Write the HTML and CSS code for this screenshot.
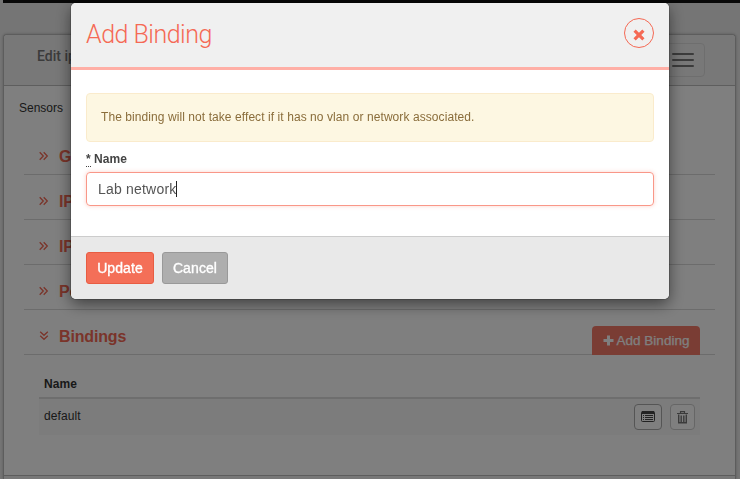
FILE: index.html
```html
<!DOCTYPE html>
<html lang="en">
<head>
<meta charset="utf-8">
<title>Add Binding</title>
<link rel="stylesheet" href="styles.css">
</head>
<body>
<svg class="defs" width="0" height="0">
  <symbol id="chevrons" viewBox="0 0 10 10"><path d="M.7 1.2 4.3 5 .7 8.8M4.7 1.2 8.3 5 4.7 8.8" fill="none" stroke="currentColor" stroke-width="1.3"/></symbol>
</svg>
<div class="page">
  <div class="topbar"></div>
  <main class="panel">
    <header class="panel-head">
      <h1>Edit ip</h1>
      <button class="menu" aria-label="Menu"><i></i><i></i><i></i></button>
    </header>
    <div class="panel-body">
      <nav class="crumb">Sensors</nav>
      <section class="row"><svg class="chev"><use href="#chevrons"/></svg><h2>G</h2></section>
      <section class="row"><svg class="chev"><use href="#chevrons"/></svg><h2>IP</h2></section>
      <section class="row"><svg class="chev"><use href="#chevrons"/></svg><h2>IP</h2></section>
      <section class="row"><svg class="chev"><use href="#chevrons"/></svg><h2>Po</h2></section>
      <section class="row"><svg class="chev open"><use href="#chevrons"/></svg><h2>Bindings</h2>
        <button class="add"><svg width="11" height="11" viewBox="0 0 11 11"><path d="M5.5 .5v10M.5 5.5h10" stroke="currentColor" stroke-width="3"/></svg><span>Add Binding</span></button>
      </section>
      <div class="table">
        <div class="th">Name</div>
        <div class="td"><span>default</span>
          <div class="actions">
            <button class="tool edit" aria-label="Edit"><svg width="14" height="12" viewBox="0 0 14 12"><rect x=".5" y=".5" width="13" height="10" rx="1" fill="none" stroke="currentColor"/><path d="M1 0h12v3H1z" fill="currentColor"/><path d="M2 4.5h1M4 4.5h8M2 6.5h1M4 6.5h8M2 8.5h1M4 8.5h8" stroke="currentColor"/></svg></button>
            <button class="tool trash" aria-label="Delete"><svg width="11" height="13" viewBox="0 0 11 13"><path d="M0 2.5h11M3.5 2V.7h4V2" fill="none" stroke="currentColor" stroke-width="1.2"/><path d="M1.7 3.5v8.2h7.6V3.5M4.2 4.5v6.5M6.8 4.5v6.5" fill="none" stroke="currentColor" stroke-width="1.4"/></svg></button>
          </div>
        </div>
      </div>
    </div>
    <footer class="panel-foot"></footer>
  </main>
</div>
<div class="backdrop">
  <div class="modal" role="dialog">
    <header class="modal-head">
      <h3>Add Binding</h3>
      <button class="close" aria-label="Close"><svg width="12" height="12" viewBox="0 0 12 12"><path d="M1.6 1.6 10.4 10.4M10.4 1.6 1.6 10.4" stroke="currentColor" stroke-width="3.2"/></svg></button>
    </header>
    <div class="modal-body">
      <div class="alert">The binding will not take effect if it has no vlan or network associated.</div>
      <label class="label"><abbr>*</abbr> Name</label>
      <div class="input"><span>Lab network</span><i class="caret"></i></div>
    </div>
    <footer class="modal-foot">
      <button class="btn update">Update</button>
      <button class="btn cancel">Cancel</button>
    </footer>
  </div>
</div>
</body>
</html>
```
FILE: styles.css
```css
* { box-sizing: border-box; }
html, body { height: 100%; }
body { margin: 0; overflow: hidden; background: #ebebeb; color: #333; font: 12px/18px "Liberation Sans", Arial, sans-serif; }
h1, h2, h3 { margin: 0; }
button { padding: 0; font-family: inherit; }
.defs { position: absolute; }
.page { height: 479px; display: flex; flex-direction: column; }
.topbar { height: 3px; margin-left: 3px; background: #111; }
.panel { height: 445px; margin: 31px 4px 0 3px; border: 1px solid #bbb; border-bottom: 0; border-radius: 4px 4px 0 0; background: #fff; box-shadow: 0 0 3px rgba(0,0,0,.25); }
.panel-head { height: 51px; display: flex; justify-content: space-between; border-bottom: 1px solid #bdbdbd; background: #f0f0f0; border-radius: 4px 4px 0 0; padding: 8px 30px 0 33px; }
.panel-head h1 { font: 500 14px/27px Roboto, sans-serif; color: #777; }
.menu { width: 44px; height: 34px; border: 1px solid #ddd; border-radius: 4px; background: transparent; display: flex; flex-direction: column; gap: 4px; align-items: center; justify-content: center; }
.menu i { width: 22px; height: 2px; background: #777; border-radius: 1px; }
.panel-body { height: 389px; padding: 13px 20px 0; }
.crumb { height: 31px; margin-left: -5px; }
.row { height: 45px; display: flex; align-items: flex-start; border-bottom: 1px solid #d8d8d8; padding: 17px 15px 0; color: #f56954; }
.row h2 { font-size: 16px; line-height: 20px; margin-left: 10px; letter-spacing: -.15px; }
.chev { width: 10px; height: 10px; margin-top: 4px; }
.open { transform: rotate(90deg); }
.add { width: 108px; height: 29px; margin: -1px 0 0 auto; border: 0; border-radius: 4px 4px 0 0; background: #f47b69; color: #fff; font-size: 13.5px; -webkit-text-stroke: .25px #fff; display: flex; align-items: center; justify-content: center; gap: 3px; }
.table { margin: 19px 15px 0; }
.th { height: 25px; border-bottom: 2px solid #ddd; font-weight: 700; padding: 1px 5px; letter-spacing: .1px; }
.td { height: 36px; background: #f9f9f9; display: flex; justify-content: space-between; padding: 5px; }
.td > span { padding-top: 3px; letter-spacing: .1px; }
.actions { display: flex; gap: 8px; }
.tool { height: 26px; background: #fff; border: 1px solid #ccc; border-radius: 4px; display: flex; align-items: center; justify-content: center; color: #444; }
.edit { width: 28px; border-color: #aaa; }
.trash { width: 25px; color: #777; }
.panel-foot { height: 5px; border-top: 1px solid #bbb; background: #f0f0f0; }
.backdrop { position: fixed; inset: 0; padding-top: 3px; background: rgba(0,0,0,.5); }
.modal { width: 598px; height: 296px; margin: 0 auto 0 71px; border-radius: 5px; overflow: hidden; background: #fff; box-shadow: 0 0 0 1px rgba(0,0,0,.15), 0 5px 15px rgba(0,0,0,.5); }
.modal-head { height: 67px; display: flex; justify-content: space-between; padding: 15px 15px 0 15px; border-bottom: 3px solid #ffafa6; background: #f0f0f0; }
.modal-head h3 { font: 300 25px/34px Roboto, sans-serif; letter-spacing: -.5px; color: #f56954; }
.close { width: 30px; height: 30px; border: 1px solid #f56954; border-radius: 50%; background: transparent; color: #f56954; display: flex; align-items: center; justify-content: center; padding: 4px 1px 0 0; }
.modal-body { height: 166px; padding: 23px 15px 0; }
.alert { height: 49px; border: 1px solid #faebcc; border-radius: 4px; background: #fdf7e2; color: #8a6d3b; padding: 14px; letter-spacing: .075px; }
.label { display: block; height: 30px; padding-top: 8px; color: #444; font-weight: 700; letter-spacing: .05px; }
.label abbr { border-bottom: 1px dotted #444; }
.input { height: 34px; border: 1px solid #f99788; border-radius: 4px; box-shadow: 0 0 4px rgba(245,105,84,.3); display: flex; align-items: center; padding: 0 11px; color: #555; font-size: 14px; letter-spacing: .2px; }
.caret { width: 1px; height: 16px; background: #222; }
.modal-foot { height: 63px; border-top: 1px solid #ccc; background: #e9e9e9; padding: 15px; display: flex; gap: 8px; }
.btn { height: 32px; border: 1px solid; border-radius: 3px; color: #fff; font-size: 14px; letter-spacing: .1px; -webkit-text-stroke: .35px #fff; }
.update { width: 68px; background: #f46f58; border-color: #e85c42; }
.cancel { width: 66px; background: #aeaeae; border-color: #999; }
```
